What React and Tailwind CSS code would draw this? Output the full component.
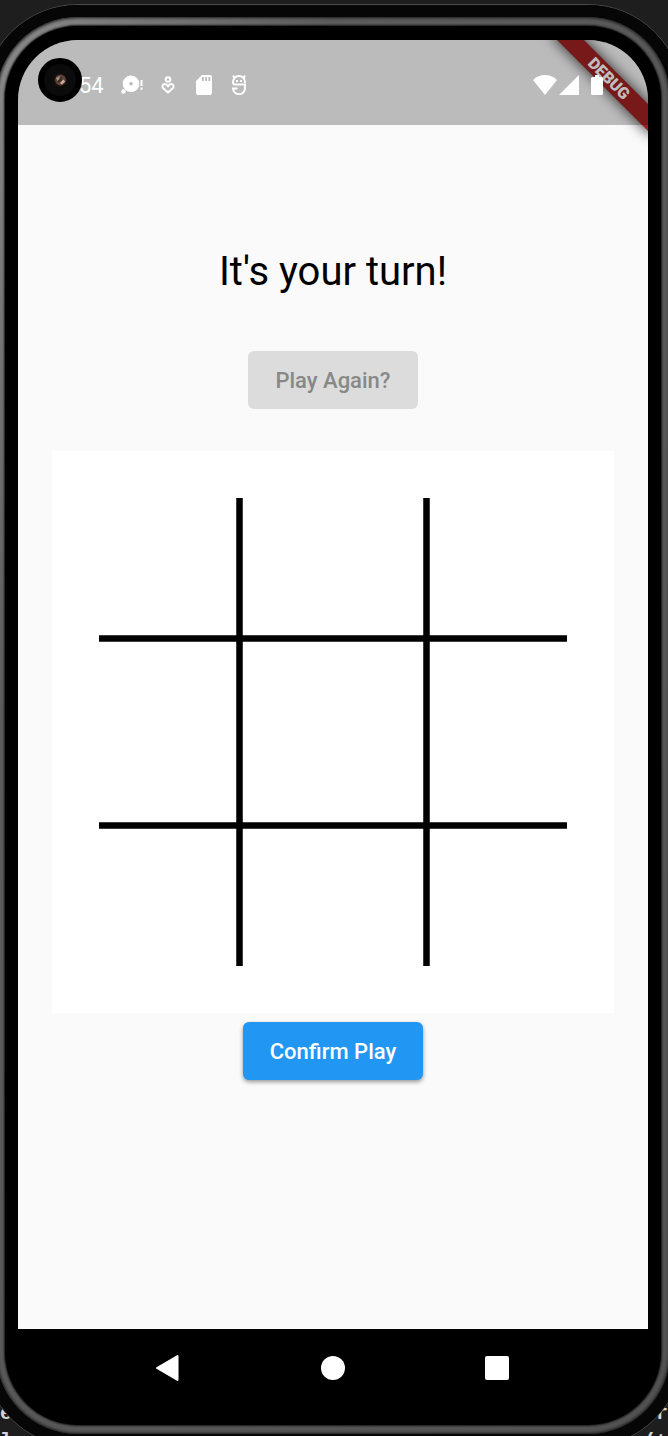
import React from "react";

function Camera() {
  return (
    <div aria-hidden="true" className="absolute left-5 top-[18px] flex size-11 items-center justify-center rounded-full border-[6px] border-black bg-[#0b0b0b]">
      <svg viewBox="0 0 16 16" className="size-4">
        <circle cx="8" cy="8" r="7" fill="#16100e" />
        <circle cx="8.5" cy="8" r="5.4" fill="#5c463c" />
        <path d="M4 6 7.500 4 7.500 7.500 5.5 9z" fill="#a98d7c" />
        <path d="M8 11 11.500 7.500 13 9.500 10 12.500z" fill="#cfae98" />
        <path d="M4.500 10.500 7 7.500 10.500 4 9 9.500z" fill="#3a2a24" />
      </svg>
    </div>
  );
}

function StatusBar() {
  return (
    <header className="relative flex h-[85px] items-center justify-between bg-black/25 pl-[61px] pr-[45px] pt-1 text-white">
      <div className="flex items-center">
        <span className="pt-[2px] text-[22px] leading-7">54</span>
        <svg viewBox="0 0 24 22" className="ml-4 h-[22px] w-6" fill="currentColor" aria-hidden="true">
          <path fillRule="evenodd" d="M11 1.500a8.300 8.300 0 1 1 0 16.600 8.300 8.300 0 0 1 0-16.600zm0 6.500a1.800 1.800 0 1 0 0 3.600 1.800 1.800 0 0 0 0-3.600z" />
          <circle cx="3.500" cy="17.500" r="2.200" />
          <path d="M20.500 6h2v6h-2zM20.500 13.500h2v2.200h-2z" />
        </svg>
        <svg viewBox="0 0 16 20" className="ml-4 h-5 w-4" fill="none" stroke="currentColor" strokeWidth="2" aria-hidden="true">
          <circle cx="8" cy="4.500" r="2.300" />
          <path d="M8 17.500 3 13C1.500 11 3 9 4.800 9 6.500 9 7.300 10 8 11.500 8.700 10 9.500 9 11.200 9 13 9 14.500 11 13 13z" strokeLinejoin="round" />
        </svg>
        <svg viewBox="0 0 16 20" className="ml-5 h-5 w-4" fill="currentColor" aria-hidden="true">
          <path fillRule="evenodd" d="M6 0h8a2 2 0 0 1 2 2v16a2 2 0 0 1-2 2H2a2 2 0 0 1-2-2V6zM6 2v4h1.800V2zm3.200 0v4H11V2zm3.200 0v4h1.800V2z" />
        </svg>
        <svg viewBox="0 0 16 20" className="ml-[19px] h-5 w-4" fill="none" stroke="currentColor" strokeWidth="1.900" aria-hidden="true">
          <path d="M2 .5 3.500 3.200M14 .5 12.500 3.200M15 9.500H4a2 2 0 0 1-2-2V7a6 6 0 0 1 12 0v1M14 9.500v3.500a6 6 0 0 1-12 .5h4.500" />
          <path d="M5 6h2M9 6h2" />
        </svg>
      </div>
      <div className="flex items-center">
        <svg viewBox="0 0 24 20" className="h-5 w-6" fill="currentColor" aria-hidden="true">
          <path d="M12 20 0 5Q5 0 12 0t12 5z" />
        </svg>
        <svg viewBox="0 0 20 20" className="ml-[2px] size-5" fill="currentColor" aria-hidden="true">
          <path d="M20 0v20H0z" />
        </svg>
        <svg viewBox="0 0 12 20" className="ml-3 h-5 w-3" fill="currentColor" aria-hidden="true">
          <path d="M4 0h4v2h3l1 1v16l-1 1H1l-1-1V3l1-1h3z" />
        </svg>
      </div>
    </header>
  );
}

function Board() {
  return (
    <svg viewBox="0 0 562 562" role="img" aria-label="Tic-tac-toe board" className="block aspect-square w-full bg-white">
      <path d="M187.500 47v468M374.500 47v468M47 187.500h468M47 374.500h468" stroke="#000" strokeWidth="6.500" />
    </svg>
  );
}

export default function App() {
  return (
    <div className="relative flex min-h-screen flex-col overflow-hidden bg-[#1e1e1e] font-[Roboto,sans-serif]">
      <div aria-hidden="true" className="absolute inset-x-0 bottom-0 flex h-9 justify-between font-['Liberation_Mono',monospace] text-[20px] font-bold leading-7 text-[#d4d4d4]">
        <div>e<br />l</div>
        <div className="text-right">ur<br />(t</div>
      </div>
      <div className="relative -mb-[11px] -ml-[17px] -mr-[15px] mt-1 flex flex-1 flex-col rounded-[95px] border border-[#4a4a4a] bg-black">
        <div className="flex flex-1 flex-col rounded-[94px] border-[12px] border-[#060606]">
          <div className="flex flex-1 flex-col rounded-[82px] bg-linear-to-br from-[#8c8c8c] via-[#5c5c5c] via-25% to-[#525252] p-[9px] shadow-[inset_0_0_3px_1px_#1a1a1a]">
            <div className="flex flex-1 flex-col rounded-[73px] bg-black px-[13px] pt-[14px] shadow-[0_0_2px_1px_#161616]">
              <div className="relative flex flex-1 flex-col overflow-hidden rounded-t-[60px] bg-[#fafafa]">
                <div className="absolute right-[-32px] top-[29px] flex h-[19px] w-[142px] rotate-45 items-center justify-center bg-[#9f2222] text-[16px] font-black leading-4 text-white shadow-[0_0_14px_rgba(0,0,0,0.8)]">
                  DEBUG
                </div>
                <StatusBar />
                <Camera />
                <main className="flex flex-1 flex-col items-center px-[34px] pb-12 pt-[118px]">
                  <h1 className="text-[40px] leading-[58px] text-black">It's your turn!</h1>
                  <button type="button" disabled className="mt-[50px] h-[58px] rounded-md bg-[#dcdcdc] px-[27px] pt-[2px] text-[22px] font-medium leading-7 text-[#888]">
                    Play Again?
                  </button>
                  <div className="mt-[42px] w-full">
                    <Board />
                  </div>
                  <button type="button" className="mt-[9px] h-[58px] rounded-md bg-[#2196f3] px-[27px] pt-[2px] text-[22px] font-medium leading-7 text-white shadow-[0_2px_4px_rgba(0,0,0,0.4)]">
                    Confirm Play
                  </button>
                </main>
              </div>
              <nav aria-label="System navigation" className="flex h-24 items-start justify-center gap-[116px] pt-[15px] text-white">
                <button type="button" aria-label="Back" className="flex size-12 items-center justify-center">
                  <svg viewBox="0 0 26 26" className="size-[26px]" fill="currentColor" stroke="currentColor" strokeWidth="2" strokeLinejoin="round">
                    <path d="M1 13 21.500 1v24z" />
                  </svg>
                </button>
                <button type="button" aria-label="Home" className="flex size-12 items-center justify-center">
                  <span className="size-6 rounded-full bg-white" />
                </button>
                <button type="button" aria-label="Recent apps" className="flex size-12 items-center justify-center">
                  <span className="size-6 rounded-xs bg-white" />
                </button>
              </nav>
            </div>
          </div>
        </div>
      </div>
    </div>
  );
}
